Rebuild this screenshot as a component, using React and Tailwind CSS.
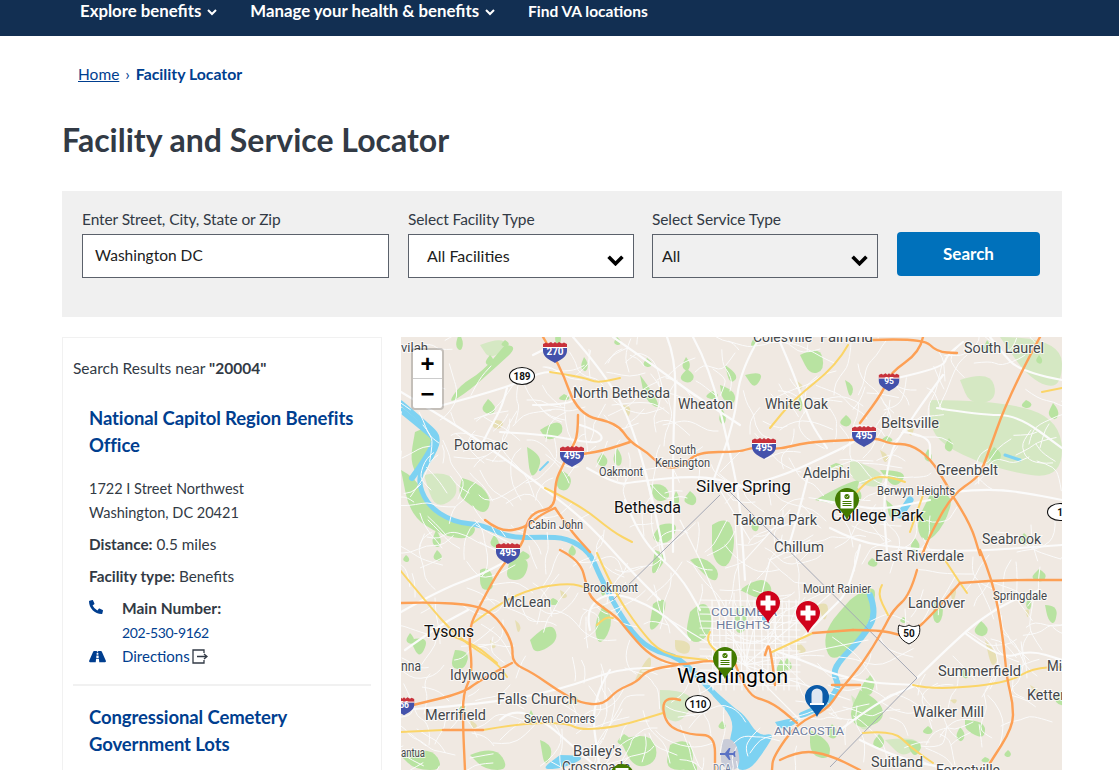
import React from "react";
import { FaPhoneAlt, FaRoad } from "react-icons/fa";

const smooth = (pts) => {
  let d = `M${pts[0][0]} ${pts[0][1]}`;
  for (let i = 1; i < pts.length - 1; i++) {
    const mx = (pts[i][0] + pts[i + 1][0]) / 2;
    const my = (pts[i][1] + pts[i + 1][1]) / 2;
    d += `Q${pts[i][0]} ${pts[i][1]} ${mx} ${my}`;
  }
  const l = pts[pts.length - 1];
  return d + `L${l[0]} ${l[1]}`;
};
const blob = (pts) => smooth([...pts, pts[0]]) + "Z";

const rng = (seed) => () => {
  seed = (seed * 16807) % 2147483647;
  return seed / 2147483647;
};

const localRoads = (() => {
  const r = rng(4242);
  const out = [];
  for (let i = 0; i < 460; i++) {
    let x = 401 + r() * 661;
    let y = 337 + r() * 433;
    let a = r() * Math.PI * 2;
    const pts = [[x, y]];
    const n = 2 + Math.floor(r() * 4);
    for (let k = 0; k < n; k++) {
      a += (r() - 0.5) * 1.7;
      const s = 6 + r() * 13;
      x += Math.cos(a) * s;
      y += Math.sin(a) * s;
      pts.push([Math.round(x), Math.round(y)]);
    }
    out.push(pts);
  }
  return out;
})();

const tinyGreens = (() => {
  const r = rng(977);
  const out = [];
  for (let i = 0; i < 70; i++) {
    const cx = 401 + r() * 661;
    const cy = 337 + r() * 433;
    const w = 3 + r() * 6;
    const h = 3 + r() * 7;
    out.push([[cx, cy - h], [cx + w, cy - h * 0.2], [cx + w * 0.4, cy + h], [cx - w, cy + h * 0.3]].map(([a, b]) => [Math.round(a), Math.round(b)]));
  }
  return out;
})();

const dcGrid = (() => {
  const out = [];
  for (let x = 712; x <= 800; x += 7) out.push(`M${x} ${600}L${x + (x % 3)} ${690}`);
  for (let y = 600; y <= 690; y += 7) out.push(`M${700} ${y}L${800} ${y + 2}`);
  const spokes = [
    [745, 665, 700, 560], [745, 665, 770, 560], [745, 665, 835, 590], [745, 665, 868, 640],
    [745, 665, 670, 620], [745, 665, 850, 700], [745, 665, 735, 520], [745, 665, 800, 720],
    [745, 560, 790, 510], [750, 540, 720, 490], [770, 560, 810, 540], [700, 560, 680, 520],
  ];
  spokes.forEach(([a, b, c, d]) => out.push(`M${a} ${b}L${c} ${d}`));
  return out;
})();

const mainRoads = [
  [[401,392],[443,417],[490,448],[540,485],[587,522],[630,570],[660,600]],
  [[443,405],[507,388],[540,372],[560,372]],
  [[507,388],[503,405],[490,428],[480,448]],
  [[533,355],[547,348]],
  [[573,337],[600,368],[627,412],[647,475],[660,535],[665,560]],
  [[613,337],[653,365],[690,392],[740,425]],
  [[667,337],[677,362],[673,435],[673,552]],
  [[693,337],[710,368],[730,452],[740,502],[745,580]],
  [[580,425],[603,432],[600,445],[550,435],[500,432]],
  [[533,405],[573,405],[577,392]],
  [[587,468],[617,485],[633,482],[700,475],[740,485]],
  [[780,342],[793,372],[802,398],[810,422],[827,448]],
  [[897,378],[943,368],[947,355],[963,342]],
  [[943,375],[923,402],[903,432],[890,452],[883,502],[887,552]],
  [[937,408],[980,415],[1017,415],[1062,448]],
  [[903,432],[930,435],[930,458]],
  [[953,492],[990,488],[1037,495],[1062,500]],
  [[810,468],[800,508],[787,552]],
  [[730,488],[770,482],[843,448],[853,442]],
  [[830,528],[857,542],[903,548],[963,552],[1062,545]],
  [[917,678],[963,633],[990,613],[1013,600],[1040,590]],
  [[773,650],[810,663],[830,673],[870,683],[917,685]],
  [[401,710],[480,705],[560,690],[620,668],[670,668]],
  [[401,612],[440,590],[480,575],[503,563]],
  [[590,630],[585,610],[610,590],[660,610],[690,640]],
  [[610,670],[590,700],[600,770]],
  [[500,720],[520,700],[600,770]],
  [[965,633],[1000,660],[1030,650],[1062,660]],
  [[840,730],[880,700],[917,685]],
  [[860,740],[900,760],[960,770]],
  [[1062,380],[1020,372],[1000,350],[990,337]],
  [[760,337],[740,370],[735,420],[710,490]],
  [[820,500],[850,505],[880,510],[930,500]],
  [[625,500],[640,540],[680,575],[700,610]],
  [[405,650],[440,625],[468,610]],
  [[860,545],[850,590],[830,610],[800,640]],
];

const highways = [
  [[543,337],[560,365],[578,415],[617,423],[630,442],[647,452],[663,468],[683,467],[697,452],[740,452],[753,447],[777,450],[807,442],[853,440],[877,438],[890,444],[910,444],[930,458],[947,485],[952,495]],
  [[578,415],[578,435],[572,448],[563,465],[555,482],[555,508],[533,512],[525,527],[523,545],[503,563],[480,605],[468,630],[473,673],[463,693],[463,727],[465,770]],
  [[630,442],[607,450],[583,454]],
  [[485,520],[500,532],[525,528],[540,515],[555,508]],
  [[555,508],[570,530],[590,552]],
  [[560,550],[580,560],[587,587],[592,600],[617,617],[627,630],[647,653],[667,663],[683,665],[710,660],[725,664]],
  [[401,603],[427,602],[477,605],[497,617],[513,643],[512,663],[533,673],[557,690],[580,703],[603,705],[617,690],[637,682],[647,670],[677,665]],
  [[512,663],[480,680],[463,693],[413,705]],
  [[443,730],[483,730]],
  [[980,550],[993,580],[1003,637],[1007,680],[1013,703],[1013,727],[990,763]],
  [[960,583],[993,580],[1062,580]],
  [[960,583],[930,617],[915,630]],
  [[917,570],[910,595],[893,610],[883,630],[863,663],[840,690],[827,710],[797,723],[773,757],[772,770]],
  [[853,630],[880,630],[900,635]],
  [[813,633],[853,630]],
  [[1040,337],[1010,392],[983,468],[977,478],[952,495],[930,535],[922,555]],
  [[952,495],[970,522],[980,555]],
  [[923,337],[920,352],[890,373],[883,392],[860,423]],
  [[873,340],[923,338],[937,352],[957,353]],
  [[733,657],[745,695],[772,702],[797,723]],
  [[680,700],[662,695],[665,725],[690,735],[715,735],[715,770]],
  [[832,685],[860,685]],
  [[775,685],[770,640],[765,655]],
  [[780,760],[800,750],[830,755],[860,770]],
];

const yellows = [
  [[550,372],[583,377],[597,383],[620,378]],
  [[545,488],[580,505],[613,532],[632,542]],
  [[400,570],[427,603],[457,637],[497,663],[507,677]],
  [[400,732],[443,730]],
  [[483,730],[523,723],[567,723],[580,730],[617,727],[663,713]],
  [[473,623],[500,603],[533,588],[570,583],[587,588]],
  [[597,625],[605,617],[613,618]],
  [[597,553],[613,590],[640,630],[663,655],[707,660]],
  [[848,345],[837,365],[793,400],[770,428]],
  [[857,492],[870,477],[890,477],[905,482]],
  [[923,495],[910,532]],
  [[772,652],[813,633]],
  [[913,685],[933,690],[1007,683],[1033,668],[1062,667]],
  [[863,733],[893,730],[910,747],[933,763]],
  [[943,557],[960,583],[967,593]],
  [[882,585],[877,593],[888,615]],
  [[1042,392],[1062,388]],
  [[710,632],[705,640],[720,655]],
  [[435,630],[472,642],[497,663]],
];

const greens = [
  [[401,470],[417,478],[427,505],[453,522],[478,525],[470,540],[440,535],[410,515]],
  [[415,432],[430,425],[441,440],[430,465],[418,478],[410,460]],
  [[505,345],[520,345],[495,368],[470,390],[447,405],[460,385],[482,372]],
  [[462,478],[478,482],[492,500],[485,515],[470,505],[458,495]],
  [[540,430],[558,418],[565,432],[548,442]],
  [[527,447],[542,455],[538,472],[530,478]],
  [[560,470],[573,475],[568,492],[555,488]],
  [[650,485],[663,482],[672,498],[655,503]],
  [[640,375],[655,395],[660,410],[645,400]],
  [[725,365],[740,375],[730,385]],
  [[720,385],[735,390],[735,405],[722,400]],
  [[660,525],[680,520],[670,545],[650,540]],
  [[712,525],[728,515],[736,540],[728,570],[712,560]],
  [[745,375],[765,370],[755,390]],
  [[800,355],[820,345],[825,370],[810,375]],
  [[815,500],[860,475],[858,490],[840,505]],
  [[845,380],[855,385],[850,400]],
  [[880,470],[910,470],[895,490]],
  [[930,495],[955,490],[945,525],[925,545],[915,525]],
  [[886,500],[900,510],[890,522]],
  [[510,560],[530,555],[525,580],[505,580]],
  [[530,640],[550,620],[560,640],[535,655]],
  [[603,605],[613,615],[608,636],[598,645],[594,625]],
  [[480,570],[490,565],[495,590],[480,590]],
  [[735,610],[745,600],[748,630],[735,635]],
  [[690,612],[706,596],[714,628],[698,645],[685,636]],
  [[653,604],[668,594],[662,622],[648,634]],
  [[655,550],[670,555],[650,580]],
  [[690,560],[700,555],[720,570],[715,585]],
  [[850,600],[876,580],[874,610],[858,645],[832,662],[824,645],[828,625]],
  [[740,590],[760,575],[775,590],[760,600]],
  [[860,690],[880,700],[885,720],[860,730],[848,715]],
  [[810,730],[830,740],[830,760],[810,755]],
  [[905,740],[925,740],[915,760]],
  [[935,600],[945,605],[940,625],[932,620]],
  [[1045,605],[1058,605],[1055,625],[1048,620]],
  [[965,720],[985,720],[985,740],[965,730]],
  [[400,755],[430,745],[445,770],[415,770]],
  [[455,650],[470,650],[465,670],[450,668]],
  [[410,640],[430,635],[420,660]],
  [[620,740],[650,730],[660,760],[635,770]],
  [[670,745],[690,735],[695,770],[665,770]],
  [[540,740],[555,745],[545,770]],
  [[470,755],[495,745],[510,770],[485,770]],
];

const pale = [
  [[930,400],[1000,400],[1062,420],[1062,480],[1000,470],[950,450],[930,430]],
  [[1000,337],[1062,337],[1062,390],[1030,380]],
  [[960,380],[990,370],[998,400],[970,405]],
  [[424,475],[450,470],[460,495],[435,510]],
  [[850,460],[885,470],[880,490],[850,480]],
  [[851,695],[880,720],[860,735]],
  [[660,690],[680,690],[695,700],[680,725],[660,715]],
  [[885,740],[925,735],[905,760]],
  [[480,345],[498,338],[510,345],[490,360]],
];

const tans = [
  [[493,420],[505,420],[500,430],[492,427]],[[622,405],[632,405],[628,420]],[[565,705],[575,690],[580,705]],
  [[560,590],[570,595],[562,600]],[[515,620],[522,625],[518,635]],[[635,680],[650,650],[652,670]],
  [[675,640],[690,640],[690,655],[675,652]],[[818,605],[830,600],[825,625]],[[795,640],[810,650],[798,655]],
  [[905,425],[915,420],[912,440]],[[880,450],[890,455],[885,465]],[[950,590],[958,585],[953,605]],
  [[985,640],[1000,655],[992,670]],[[1025,610],[1030,608],[1028,620]],[[1030,685],[1040,690],[1035,695]],
  [[950,700],[958,698],[955,705]],[[795,380],[805,385],[798,392]],[[835,465],[845,470],[838,475]],
  [[490,640],[498,645],[492,650]],[[470,720],[480,725],[472,730]],
];

const water = [
  { d: [[401,403],[427,425],[440,438],[430,460],[417,478],[427,505],[453,522],[483,525],[510,538],[543,537],[567,538],[590,552],[600,577],[627,627],[650,650],[680,657],[710,690],[733,710]], w: 5 },
  { d: [[870,595],[877,613],[863,637],[840,660],[833,673],[840,687],[825,705],[802,715]], w: 6 },
  { d: [[402,411],[428,432],[436,440],[425,460],[412,478]], w: 6 },
  { d: [[548,462],[540,470]], w: 2 },
  { d: [[910,500],[900,515]], w: 7 },
  { d: [[1005,455],[1020,460]], w: 3 },
];

const lakes = [
  [[712,695],[730,705],[745,715],[758,736],[775,733],[765,750],[750,770],[735,770],[728,745],[735,720]],
  [[775,722],[800,716],[795,725],[780,730]],
  [[560,755],[590,755],[565,768],[540,770]],
  [[760,605],[770,615],[762,625]],
];

const labels = [
  ["vilah", 401, 352, 27, 13],
  ["North Bethesda", 573, 398, 97, 14],
  ["Wheaton", 678, 409, 55, 14],
  ["White Oak", 765, 409, 63, 14],
  ["South Laurel", 964, 353, 80, 14],
  ["Colesville", 753, 342, 59, 14],
  ["Fairland", 820, 342, 53, 14],
  ["Beltsville", 881, 428, 58, 14],
  ["Potomac", 454, 450, 54, 14],
  ["South", 669, 454, 27, 12],
  ["Kensington", 655, 467, 55, 12],
  ["Oakmont", 599, 476, 44, 12],
  ["Adelphi", 803, 478, 47, 14],
  ["Greenbelt", 936, 475, 62, 14],
  ["Berwyn Heights", 877, 495, 78, 12],
  ["Silver Spring", 696, 492, 95, 16, "#111"],
  ["Bethesda", 614, 513, 67, 16, "#111"],
  ["Takoma Park", 733, 525, 84, 14],
  ["College Park", 831, 521, 93, 16, "#111"],
  ["Cabin John", 528, 529, 55, 12],
  ["Chillum", 774, 552, 50, 14],
  ["East Riverdale", 875, 561, 89, 14],
  ["Seabrook", 982, 544, 59, 14],
  ["Brookmont", 583, 592, 55, 12],
  ["McLean", 503, 607, 48, 14],
  ["Mount Rainier", 803, 593, 68, 12],
  ["Landover", 908, 608, 57, 14],
  ["Springdale", 993, 600, 54, 12],
  ["Tysons", 424, 637, 50, 16, "#111"],
  ["COLUMBIA", 711, 616, 66, 11, "#6f7d9e"],
  ["HEIGHTS", 716, 629, 54, 11, "#6f7d9e"],
  ["Washington", 677, 683, 111, 20, "#000"],
  ["Idylwood", 450, 680, 55, 14],
  ["nna", 401, 671, 20, 14],
  ["Falls Church", 497, 704, 80, 14],
  ["Merrifield", 425, 720, 61, 14],
  ["Seven Corners", 524, 723, 71, 12],
  ["Summerfield", 938, 676, 83, 14],
  ["Mi", 1047, 671, 15, 14],
  ["Ketter", 1027, 700, 38, 14],
  ["Walker Mill", 913, 717, 71, 14],
  ["ANACOSTIA", 774, 735, 70, 11, "#6f7d9e"],
  ["antua", 401, 757, 24, 12],
  ["Bailey's", 573, 756, 49, 14],
  ["Crossroads", 562, 772, 68, 14],
  ["Suitland", 871, 767, 52, 14],
  ["Forestville", 936, 775, 64, 14],
  ["DCA", 713, 772, 18, 10, "#6f7d9e"],
];

function Interstate({ x, y, t, s = 1 }) {
  return (
    <g transform={`translate(${x} ${y}) scale(${s})`}>
      <path d="M-12 -7 L-9 -8.5 L-7 -7.5 L-4 -9 L-2 -7.5 L0 -9 L2 -7.5 L4 -9 L7 -7.5 L9 -8.5 L12 -7 L12 -3 L-12 -3Z" fill="#c8323b" />
      <path d="M-12 -3 H12 V0 C12 6 5 9 0 12 C-5 9 -12 6 -12 0Z" fill="#4452ab" />
      <rect x="-12" y="-4" width="24" height="1" fill="#fff" />
      <text x="0" y="3.5" textAnchor="middle" fill="#fff" fontSize="10" fontWeight="700" style={{ fontFamily: '"Roboto", sans-serif' }}>{t}</text>
    </g>
  );
}

function Oval({ x, y, t }) {
  return (
    <g transform={`translate(${x} ${y})`}>
      <ellipse rx="12.5" ry="8.5" fill="#fff" stroke="#111" strokeWidth="1.1" />
      <text x="0" y="3.5" textAnchor="middle" fill="#111" fontSize="10" fontWeight="700" style={{ fontFamily: '"Roboto", sans-serif' }}>{t}</text>
    </g>
  );
}

function Pin({ x, top, color, kind }) {
  return (
    <g transform={`translate(${x} ${top + 12})`}>
      <path d="M-12 0 A12 12 0 1 1 12 0 C12 8 3 12 0 20 C-3 12 -12 8 -12 0Z" fill={color} />
      {kind === "cross" && <path d="M-2.5 -7.5H2.5V-2.5H7.5V2.5H2.5V7.5H-2.5V2.5H-7.5V-2.5H-2.5Z" fill="#fff" />}
      {kind === "doc" && (
        <g>
          <rect x="-6.5" y="-8" width="13" height="16.5" fill="#fff" />
          <circle cx="0" cy="-3.5" r="2.6" fill="#427a00" />
          <path d="M-1.3 -3.6L-.3 -2.6L1.400 -4.400" fill="none" stroke="#fff" strokeWidth=".8" />
          <rect x="-4.5" y="1" width="9" height="1" fill="#427a00" />
          <rect x="-4.5" y="3" width="9" height="1" fill="#427a00" />
          <rect x="-4.5" y="5" width="9" height="1" fill="#427a00" />
        </g>
      )}
      {kind === "stone" && (
        <g>
          <path d="M-5.5 6 V-3 A5.5 5.5 0 0 1 5.5 -3 V6Z" fill="#dfe7f2" />
          <rect x="-7" y="6" width="14" height="2" fill="#fff" />
        </g>
      )}
    </g>
  );
}

function MapArt() {
  return (
    <svg viewBox="401 337 661 433" className="block w-[661px] h-[433px]">
      <rect x="401" y="337" width="661" height="433" fill="#f0e9e2" />
      {pale.map((p, i) => <path key={i} d={blob(p)} fill="#d5e8c3" />)}
      {greens.map((p, i) => <path key={i} d={blob(p)} fill="#b8e3a1" />)}
      {tinyGreens.map((p, i) => <path key={i} d={blob(p)} fill="#b8e3a1" />)}
      {tans.map((p, i) => <path key={i} d={blob(p)} fill="#e7dfb4" />)}
      {lakes.slice(0, 2).map((p, i) => <path key={i} d={blob(p)} fill="#7dd2f2" />)}
      {water.map((w, i) => <path key={i} d={smooth(w.d)} fill="none" stroke="#7dd2f2" strokeWidth={w.w} strokeLinecap="round" strokeLinejoin="round" />)}
      {lakes.slice(2).map((p, i) => <path key={i} d={blob(p)} fill="#7dd2f2" />)}
      <path d={blob([[722,740],[735,735],[742,770],[720,770]])} fill="#c9ccd8" />
      <g fill="none" stroke="#fbfbfb" strokeLinecap="round" strokeLinejoin="round">
        {localRoads.map((p, i) => <path key={i} d={smooth(p)} strokeWidth="1" />)}
        {dcGrid.map((d, i) => <path key={i} d={d} strokeWidth="1.1" />)}
        {mainRoads.map((p, i) => <path key={i} d={smooth(p)} strokeWidth="2.2" />)}
      </g>
      <path d="M720 495L613 600M730 492L917 678L830 767" fill="none" stroke="#a4a8b5" strokeWidth="1" />
      <g fill="none" stroke="#fbd568" strokeWidth="2" strokeLinecap="round" strokeLinejoin="round">
        {yellows.map((p, i) => <path key={i} d={smooth(p)} />)}
      </g>
      <g fill="none" stroke="#fda055" strokeWidth="2.4" strokeLinecap="round" strokeLinejoin="round">
        {highways.map((p, i) => <path key={i} d={smooth(p)} />)}
      </g>
      <Interstate x={555} y={351} t="270" />
      <Oval x={522} y={376} t="189" />
      <Interstate x={572} y={455} t="495" />
      <Interstate x={508} y={552} t="495" />
      <Interstate x={764} y={447} t="495" />
      <Interstate x={864} y={435} t="495" />
      <Interstate x={889} y={381} t="95" s={0.85} />
      <Interstate x={404} y={705} t="66" s={0.85} />
      <Oval x={698} y={704} t="110" />
      <Oval x={1060} y={512} t="1" />
      <g transform="translate(909 633)">
        <path d="M-10 -8 C-6 -6 -3 -6 0 -8 C3 -6 6 -6 10 -8 C12 -2 11 6 0 11 C-11 6 -12 -2 -10 -8Z" fill="#fff" stroke="#111" strokeWidth="1" />
        <text x="0" y="3.5" textAnchor="middle" fill="#111" fontSize="10" fontWeight="700" style={{ fontFamily: '"Roboto", sans-serif' }}>50</text>
      </g>
      <path d="M723 751l5 0 4-5 1.500 0-1.500 5 4 0 1.500-2 1 0-.5 3 .5 3-1 0-1.500-2-4 0 1.500 5-1.500 0-4-5-5 0Z" transform="translate(-3 2)" fill="#5b72c4" />
      {labels.map(([t, x, y, w, s, c], i) => (
        <text
          key={i}
          x={x}
          y={y}
          textLength={w}
          lengthAdjust="spacingAndGlyphs"
          fontSize={s}
          fill={c || "#44474a"}
          stroke="#ffffff"
          strokeOpacity="0.75"
          strokeWidth="2"
          paintOrder="stroke"
          style={{ fontFamily: '"Roboto", sans-serif' }}
        >
          {t}
        </text>
      ))}
      <Pin x={847} top={488} color="#427a00" kind="doc" />
      <Pin x={725} top={647} color="#427a00" kind="doc" />
      <Pin x={768} top={591} color="#d0021b" kind="cross" />
      <Pin x={808} top={601} color="#d0021b" kind="cross" />
      <Pin x={817} top={685} color="#0a5aa8" kind="stone" />
      <Pin x={622} top={764} color="#427a00" kind="doc" />
    </svg>
  );
}

const Chevron = ({ className = "" }) => (
  <svg viewBox="0 0 16 10" className={className} fill="none" stroke="currentColor" strokeWidth="3.4">
    <path d="M1.500 1.500L8 8L14.500 1.500" />
  </svg>
);

const NavItem = ({ children, chevron, className = "text-[16.800px]" }) => (
  <span className={`flex items-center gap-[6px] font-bold text-white leading-[22px] ${className}`}>
    {children}
    {chevron && (
      <svg viewBox="0 0 10 7" className="w-[10px] h-[7px] mt-[2px]" fill="none" stroke="currentColor" strokeWidth="2">
        <path d="M1 1L5 5L9 1" />
      </svg>
    )}
  </span>
);

const Select = ({ label, value, className = "", valueClass = "" }) => (
  <div className="w-[226px]">
    <div className="text-[15.500px] tracking-[-0.1px] leading-[22px] text-[#323a45] mb-[4px]">{label}</div>
    <div className={`relative h-[44px] border border-[#5b616b] flex items-center text-[16px] text-[#212121] ${className}`}>
      <span className={valueClass}>{value}</span>
      <Chevron className="absolute right-[9px] top-[20px] w-[17px] h-[11px] text-black" />
    </div>
  </div>
);

const H2 = ({ children }) => (
  <div className="text-[18.500px] font-bold leading-[27px] text-[#003e8f] tracking-[-0.1px]">{children}</div>
);

export default function App() {
  return (
    <div className="h-[770px] w-full overflow-hidden bg-white text-[#323a45] text-[15.500px]" style={{ fontFamily: '"Lato", "Noto Sans", sans-serif' }}>
      <nav className="h-9 bg-[#122f52] flex items-start pl-20 gap-[33px]">
        <NavItem chevron>Explore benefits</NavItem>
        <NavItem chevron>Manage your health &amp; benefits</NavItem>
        <NavItem className="text-[15.500px]">Find VA locations</NavItem>
      </nav>

      <main className="pl-[62px] pr-[57px]">
        <div className="pl-[16px] pt-[27px] flex items-center gap-[6px] text-[15.500px] leading-[22px]">
          <a className="underline text-[#003e8f]">Home</a>
          <span className="text-[#003e8f] text-[16px]">›</span>
          <span className="font-bold text-[15.800px] text-[#003e8f]">Facility Locator</span>
        </div>

        <h1 className="mt-[33px] text-[32px] leading-[44px] font-bold text-[#323a45]">Facility and Service Locator</h1>

        <section className="mt-[29px] h-[126px] bg-[#f0f0f0] pl-[20px] pt-[17px] flex gap-[19px]">
          <div className="w-[307px]">
            <div className="text-[15.500px] tracking-[-0.1px] leading-[22px] text-[#323a45] mb-[4px]">Enter Street, City, State or Zip</div>
            <div className="h-[44px] bg-white border border-[#5b616b] flex items-center pl-[12px] text-[15.500px] text-[#212121]">Washington DC</div>
          </div>
          <Select label="Select Facility Type" value="All Facilities" className="bg-white" valueClass="pl-[18px]" />
          <div className="-ml-[1px]">
            <Select label="Select Service Type" value="All" valueClass="pl-[9px]" />
          </div>
          <button className="mt-[24px] h-[44px] w-[143px] rounded-[4px] bg-[#0071bb] text-white font-bold text-[17px]">Search</button>
        </section>

        <div className="mt-[20px] flex gap-[19px] h-[433px]">
          <aside className="w-[320px] h-[445px] shrink-0 border border-[#f1f1f1] pl-[10px] pr-[10px] pt-[18px]">
            <p className="text-[15.500px] leading-[24px]">Search Results near <b>"20004"</b></p>
            <div className="pl-[16px] mt-[25px]">
              <H2>National Capitol Region Benefits<br />Office</H2>
              <p className="mt-[18px] leading-[24px] text-[14.500px]">1722 I Street Northwest<br />Washington, DC 20421</p>
              <p className="mt-[7px] leading-[24px] text-[15.300px]"><b>Distance:</b> 0.5 miles</p>
              <p className="mt-[8px] leading-[24px] text-[15.300px]"><b>Facility type:</b> Benefits</p>
              <div className="mt-[8px] flex">
                <div className="w-[33px] shrink-0 pt-[4px] text-[#003e8f]"><FaPhoneAlt className="w-[14px] h-[14px]" /></div>
                <div className="leading-[24px]"><b>Main Number:</b><div className="text-[#003e8f] text-[14px] tracking-[-0.4px] mt-[1px]">202-530-9162</div></div>
              </div>
              <div className="flex items-center h-[24px] -mt-[1px]">
                <div className="w-[33px] shrink-0 text-[#003e8f]"><FaRoad className="w-[17px] h-[15px]" /></div>
                <span className="text-[#003e8f] text-[15px]">Directions</span>
                <svg viewBox="0 0 16 15" className="w-[16px] h-[15px] ml-[2px]" fill="none" stroke="#323a45" strokeWidth="1.300">
                  <path d="M12 4V1H1V14H12V11M5 7.500H15M12 5L15 7.500L12 10" />
                </svg>
              </div>
            </div>
            <div className="mt-[16px] h-[2px] bg-[#f1f1f1]" />
            <div className="pl-[16px] mt-[18px]">
              <H2>Congressional Cemetery<br />Government Lots</H2>
            </div>
          </aside>

          <div className="relative w-[661px] shrink-0 overflow-hidden">
            <MapArt />
            <div className="absolute left-[10px] top-[11px] w-[33px] rounded-[4px] bg-white border-2 border-[#0000002e] bg-clip-padding text-black font-bold">
              <div className="h-[29px] flex items-center justify-center border-b border-[#cccccc] text-[24px] leading-none" style={{ fontFamily: '"Liberation Sans", sans-serif' }}>+</div>
              <div className="h-[29px] flex items-center justify-center text-[24px] leading-none" style={{ fontFamily: '"Liberation Sans", sans-serif' }}>−</div>
            </div>
          </div>
        </div>
      </main>
    </div>
  );
}
